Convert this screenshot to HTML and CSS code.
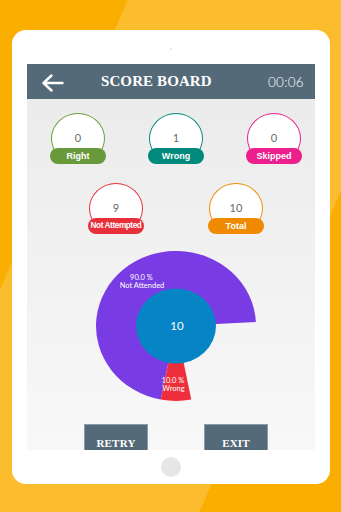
FILE: index.html
```html
<!DOCTYPE html>
<html>
<head>
<meta charset="utf-8">
<link rel="stylesheet" href="styles.css">
</head>
<body>
<div class="page">
  <div class="tablet">
    <div class="camera"></div>
    <div class="screen">
      <div class="header">
        <svg class="back" width="23" height="18" viewBox="0 0 23 18">
          <path d="M21.5 9H3 M10.5 1.5 L2.5 9 L10.5 16.5" stroke="#fff" stroke-width="2.4" fill="none" stroke-linecap="round" stroke-linejoin="round"/>
        </svg>
        <div class="title">SCORE BOARD</div>
        <div class="timer">00:06</div>
      </div>
      <div class="content">
        <div class="row row1">
          <div class="stat green"><div class="ring"><span class="num">0</span></div><div class="pill">Right</div></div>
          <div class="stat teal"><div class="ring"><span class="num">1</span></div><div class="pill">Wrong</div></div>
          <div class="stat pink"><div class="ring"><span class="num">0</span></div><div class="pill">Skipped</div></div>
        </div>
        <div class="row row2">
          <div class="stat red"><div class="ring"><span class="num">9</span></div><div class="pill small">Not Attempted</div></div>
          <div class="stat orange"><div class="ring"><span class="num">10</span></div><div class="pill">Total</div></div>
        </div>
        <div class="chart">
          <svg width="160" height="150" viewBox="0 0 160 150">
            <path d="M80 75 L64.7 148.6 A80 75 0 1 1 159.9 71.1 Z" fill="#793BE3"/>
            <path d="M80 75 L95.3 148.6 A80 75 0 0 1 64.7 148.6 Z" fill="#EE2F3B"/>
            <ellipse cx="80" cy="75" rx="40" ry="37.5" fill="#0784C6"/>
            <text class="lbl" x="45.5" y="29">90.0 %</text>
            <text class="lbl" x="46" y="37">Not Attended</text>
            <text class="center" x="81" y="79">10</text>
            <text class="lbl" x="77" y="132">10.0 %</text>
            <text class="lbl" x="77.5" y="139.5">Wrong</text>
          </svg>
        </div>
        <div class="buttons">
          <div class="btn">RETRY</div>
          <div class="btn">EXIT</div>
        </div>
      </div>
    </div>
    <div class="home"></div>
  </div>
</div>
</body>
</html>
```
FILE: styles.css
```css
html, body {
  margin: 0;
  padding: 0;
  height: 100%;
}
html {
  background: linear-gradient(113.8deg, #FAAE00 117px, #FBBD2E 117px, #FBBD2E 389px, #FAAE00 389px);
}
body {
  font-family: "Liberation Sans", Arial, sans-serif;
}
.page {
  width: 341px;
  height: 512px;
  padding: 30px 0 0 12px;
  box-sizing: border-box;
}
.tablet {
  width: 318px;
  height: 454px;
  background: #fff;
  border-radius: 14px;
  padding: 18px 15px 0;
  box-sizing: border-box;
  display: flex;
  flex-direction: column;
  align-items: center;
}
.camera {
  width: 2px;
  height: 2px;
  border-radius: 50%;
  background: #e4e4e4;
  margin-bottom: 14px;
}
.screen {
  width: 288px;
  height: 386px;
  overflow: hidden;
  background: linear-gradient(#EAEAEA, #F8F8F8);
  display: flex;
  flex-direction: column;
}
.header {
  height: 35px;
  flex: none;
  background: #546A78;
  display: flex;
  align-items: center;
  padding: 0 11px 0 14px;
  color: #fff;
}
.back {
  display: block;
  margin-top: 3px;
}
.title {
  margin-left: 37px;
  font-family: "Liberation Serif", "Times New Roman", serif;
  font-weight: bold;
  font-size: 15px;
  letter-spacing: 0.1px;
}
.timer {
  margin-left: auto;
  font-family: Lato, "Open Sans", sans-serif;
  font-weight: 300;
  font-size: 13.5px;
  letter-spacing: 0.3px;
  color: #fff;
}
.content {
  padding: 14px 0 0 10px;
  display: flex;
  flex-direction: column;
  align-items: center;
}
.row {
  display: flex;
  justify-content: center;
}
.row1 {
  gap: 42px;
}
.row2 {
  gap: 64px;
  margin-top: 19px;
}
.stat {
  display: grid;
  width: 56px;
}
.ring, .pill {
  grid-area: 1 / 1;
}
.ring {
  width: 54px;
  height: 51px;
  box-sizing: border-box;
  border: 1.5px solid;
  border-radius: 50%;
  background: #fff;
  justify-self: center;
  display: flex;
  justify-content: center;
  padding-top: 17px;
}
.num {
  font-family: Lato, "Open Sans", sans-serif;
  font-weight: 400;
  font-size: 11px;
  color: #6a6a6a;
  line-height: 14px;
}
.pill {
  align-self: end;
  height: 16px;
  width: 56px;
  border-radius: 8px;
  color: #fff;
  font-weight: bold;
  font-size: 9px;
  line-height: 16px;
  text-align: center;
  white-space: nowrap;
}
.pill.small {
  font-size: 8.2px;
  letter-spacing: -0.4px;
}
.green .ring { border-color: #6A9C38; }
.green .pill { background: #68993A; }
.teal .ring { border-color: #008A7C; }
.teal .pill { background: #008A7C; }
.pink .ring { border-color: #EC1F8C; }
.pink .pill { background: #EC1F8C; }
.red .ring { border-color: #E8303B; }
.red .pill { background: #E8303B; }
.orange .ring { border-color: #F08A00; }
.orange .pill { background: #F08A00; }
.chart {
  margin-top: 17px;
  height: 150px;
}
.chart svg {
  display: block;
}
.lbl {
  font-family: Lato, "Open Sans", sans-serif;
  font-weight: 400;
  font-size: 7.5px;
  fill: #fff;
  text-anchor: middle;
}
.center {
  font-family: Lato, "Open Sans", sans-serif;
  font-weight: 400;
  font-size: 11.5px;
  fill: #fff;
  text-anchor: middle;
}
.buttons {
  margin-top: 23px;
  display: flex;
  gap: 56px;
}
.btn {
  width: 64px;
  height: 36px;
  box-sizing: border-box;
  background: #546A78;
  border: 1px solid #8A9CA7;
  color: #fff;
  font-family: "Liberation Serif", "Times New Roman", serif;
  font-weight: bold;
  font-size: 11px;
  text-align: center;
  padding-top: 12px;
  letter-spacing: 0.2px;
}
.home {
  width: 20px;
  height: 20px;
  border-radius: 50%;
  background: #E6E6E6;
  margin-top: 7px;
}
```
